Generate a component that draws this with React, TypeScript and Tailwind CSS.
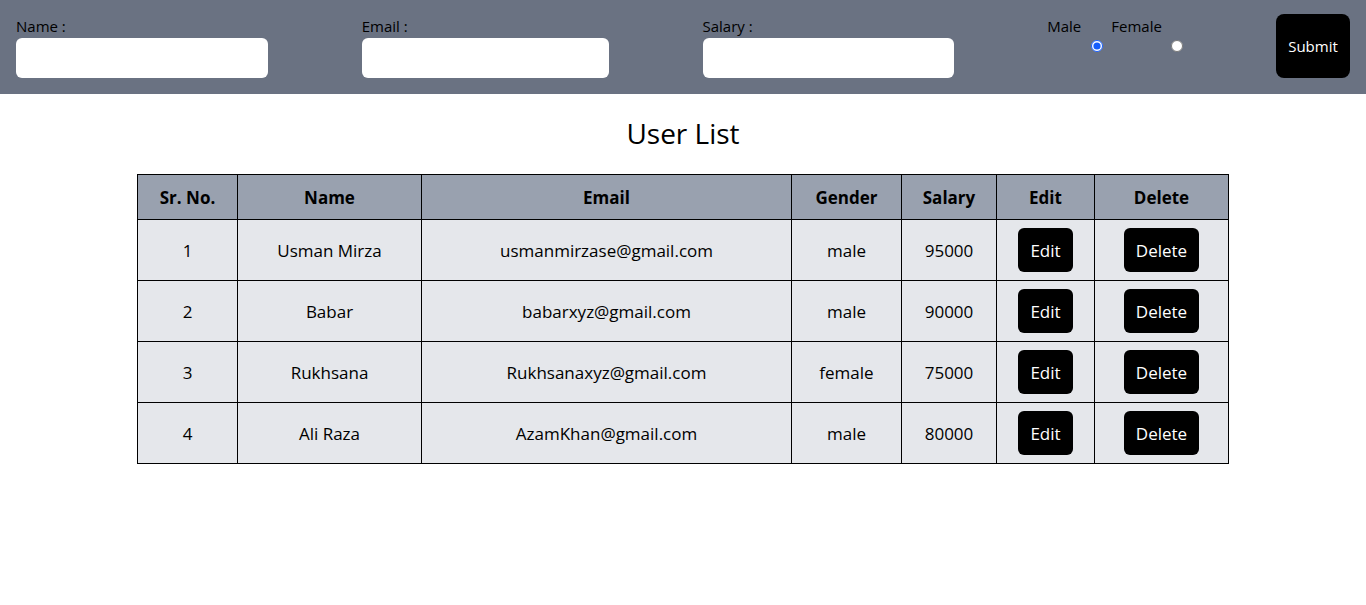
const users = [
  { id: 1, name: "Usman Mirza", email: "usmanmirzase@gmail.com", gender: "male", salary: 95000 },
  { id: 2, name: "Babar", email: "babarxyz@gmail.com", gender: "male", salary: 90000 },
  { id: 3, name: "Rukhsana", email: "Rukhsanaxyz@gmail.com", gender: "female", salary: 75000 },
  { id: 4, name: "Ali Raza", email: "AzamKhan@gmail.com", gender: "male", salary: 80000 },
]

function App() {
  return (
    <div className="min-h-[605px] bg-white font-['Open_Sans',sans-serif] text-black">
      <form className="bg-gray-500 h-[94px] pl-4 pr-4 flex items-start justify-between">
        <div className="flex flex-col mt-[16px]">
          <label className="text-[15px] leading-5">Name :</label>
          <input type="text" className="bg-white rounded-md w-[252px] h-10 mt-[2px] outline-none" />
        </div>
        <div className="flex flex-col mt-[16px]">
          <label className="text-[15px] leading-5">Email :</label>
          <input type="email" className="bg-white rounded-md w-[247px] h-10 mt-[2px] outline-none" />
        </div>
        <div className="flex flex-col mt-[16px]">
          <label className="text-[15px] leading-5">Salary :</label>
          <input type="number" className="bg-white rounded-md w-[251px] h-10 mt-[2px] outline-none" />
        </div>
        <div className="flex items-start w-[135px] text-[15px] mt-[16px]">
          <label className="leading-5">Male</label>
          <input type="radio" name="gender" defaultChecked className="w-[12px] h-[12px] mt-[24px] ml-[10px] accent-blue-600" />
          <label className="leading-5 ml-[8px]">Female</label>
          <input type="radio" name="gender" className="w-[12px] h-[12px] mt-[24px] ml-[9px]" />
        </div>
        <button type="button" className="bg-black text-white text-[15px] rounded-lg w-[74px] h-16 mt-[14px]">
          Submit
        </button>
      </form>

      <h1 className="text-center text-[28px] leading-9 mt-[21px]">User List</h1>

      <table className="mx-auto mt-[23px] w-[1091px] table-fixed border-collapse text-[17px]">
        <thead>
          <tr className="bg-gray-400 h-[45px]">
            <th className="border border-black w-[100px] font-bold pt-[2px]">Sr. No.</th>
            <th className="border border-black w-[184px] font-bold pt-[2px]">Name</th>
            <th className="border border-black w-[370px] font-bold pt-[2px]">Email</th>
            <th className="border border-black w-[110px] font-bold pt-[2px]">Gender</th>
            <th className="border border-black w-[95px] font-bold pt-[2px]">Salary</th>
            <th className="border border-black w-[98px] font-bold pt-[2px]">Edit</th>
            <th className="border border-black w-[134px] font-bold pt-[2px]">Delete</th>
          </tr>
        </thead>
        <tbody>
          {users.map(u => (
            <tr key={u.id} className="bg-gray-200 h-[61px] text-center">
              <td className="border border-black pt-[2px]">{u.id}</td>
              <td className="border border-black pt-[2px]">{u.name}</td>
              <td className="border border-black pt-[2px]">{u.email}</td>
              <td className="border border-black pt-[2px]">{u.gender}</td>
              <td className="border border-black pt-[2px]">{u.salary}</td>
              <td className="border border-black">
                <button className="bg-black text-white rounded-md w-[55px] h-11 pt-[2px]">Edit</button>
              </td>
              <td className="border border-black">
                <button className="bg-black text-white rounded-md w-[75px] h-11 pt-[2px]">Delete</button>
              </td>
            </tr>
          ))}
        </tbody>
      </table>
    </div>
  )
}

export default App
